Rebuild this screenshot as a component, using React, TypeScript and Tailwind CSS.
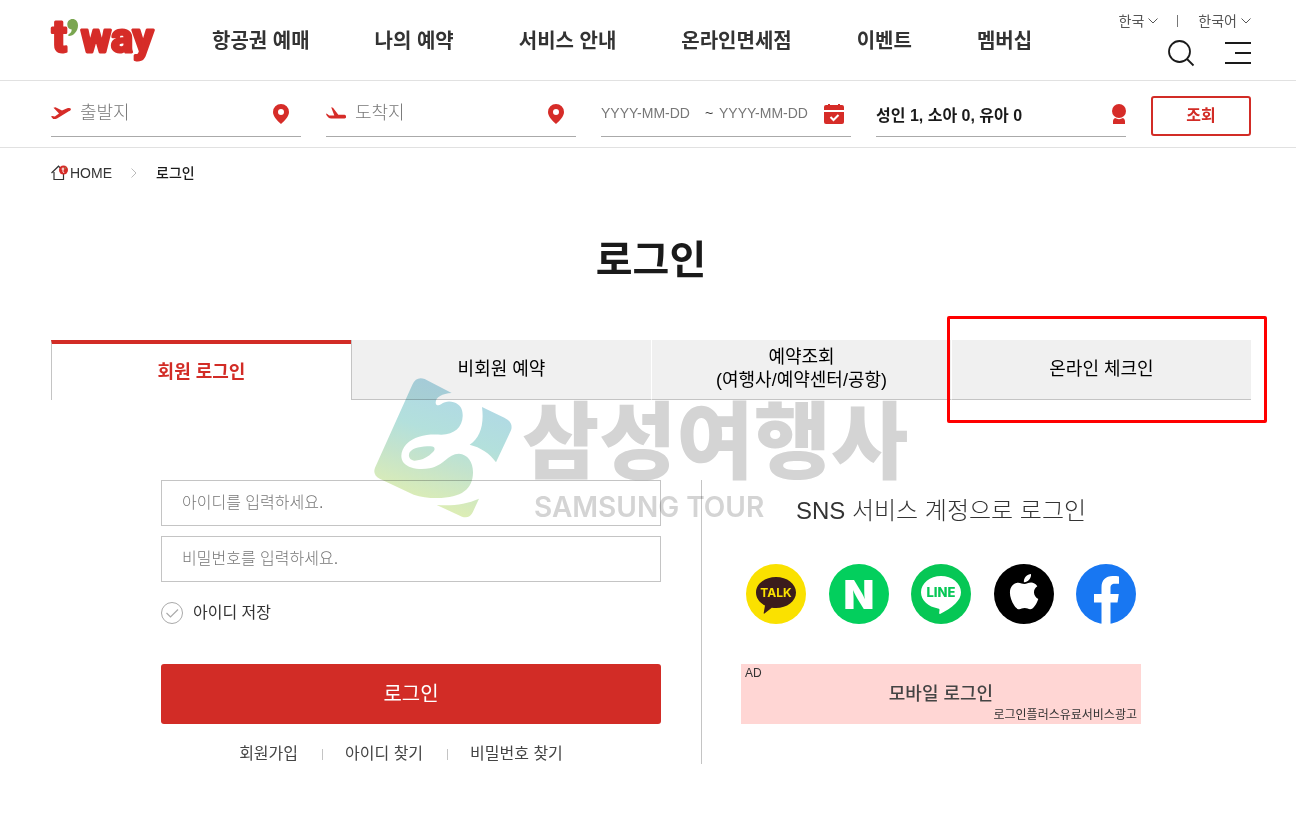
import type { ReactNode } from "react";

const NAV_ITEMS = ["항공권 예매", "나의 예약", "서비스 안내", "온라인면세점", "이벤트", "멤버십"];

const TABS = [
  { id: "member", lines: ["회원 로그인"] },
  { id: "guest", lines: ["비회원 예약"] },
  { id: "lookup", lines: ["예약조회", "(여행사/예약센터/공항)"] },
  { id: "checkin", lines: ["온라인 체크인"] },
];

const ACCOUNT_LINKS = ["회원가입", "아이디 찾기", "비밀번호 찾기"];

function Logo() {
  return (
    <svg width="112" height="60" viewBox="0 0 112 60" role="img" aria-label="t'way">
      <g
        fill="#d62c28"
        stroke="#d62c28"
        strokeWidth="3"
        strokeLinejoin="round"
        className="font-['Roboto',sans-serif] font-bold"
      >
        <text x="2" y="42" className="text-[44px]">t</text>
        <text x="31" y="42" className="text-[41px]">way</text>
      </g>
      <path
        d="M22.500 9c3.200 0 5.500 2.500 5.500 6.500 0 5.500-4.500 10.500-9 10.500-1-.3-1-1.300-.3-1.800 2-1.200 3-2.700 3-4.700-2.700-.2-4.400-2.200-4.400-5 0-3.200 2.200-5.500 5.200-5.500z"
        fill="#7aa650"
      />
    </svg>
  );
}

function ChevronIcon() {
  return (
    <svg width="10" height="6" viewBox="0 0 10 6" fill="none" stroke="#555" aria-hidden="true">
      <path d="M.5.5 5 5 9.500.5" />
    </svg>
  );
}

function SearchIcon() {
  return (
    <svg width="28" height="28" viewBox="0 0 28 28" fill="none" stroke="#1a1a1a" strokeWidth="1.800" aria-hidden="true">
      <circle cx="12.500" cy="12.500" r="10.500" />
      <path d="M20 20 26.500 26.500" />
    </svg>
  );
}

function MenuIcon() {
  return (
    <svg width="26" height="22" viewBox="0 0 26 22" fill="#1a1a1a" aria-hidden="true">
      <path d="M0 0h26v2H0zM10 10h16v2H10zM0 20h26v2H0z" />
    </svg>
  );
}

function DepartIcon() {
  return (
    <svg width="20" height="13" viewBox="0 0 20 13" fill="#d62c28" aria-hidden="true">
      <path d="M2.500.7 4.500.3l6.500 3.200 5.200-2.200c1.500-.6 3.200-.5 3.600.4.400 1-.7 2-2 2.600L6 11.500c-1.300.5-2.600.8-3.800.5L0 9.600l1.200-.5 2.600.4L8 6.500z" />
    </svg>
  );
}

function ArriveIcon() {
  return (
    <svg width="20" height="13" viewBox="0 0 20 13" fill="#d62c28" aria-hidden="true">
      <path d="M5.200.2 7 .8l5.300 6.900h5.500c1.500 0 2.400.8 2.400 1.900s-.9 2-2.400 2H6.200c-1.600 0-3-.3-4-1.300C1 9.200.2 8 0 6.600l1.300.3 1.900 1.700 5.100-.2z" />
    </svg>
  );
}

function PinIcon() {
  return (
    <svg width="16" height="20" viewBox="0 0 16 20" fill="#d62c28" aria-hidden="true">
      <path
        fillRule="evenodd"
        d="M8 0a8 8 0 0 1 8 8c0 4.500-4.500 9-8 12C4.500 17 0 12.500 0 8a8 8 0 0 1 8-8zm0 5a3 3 0 1 0 0 6 3 3 0 0 0 0-6z"
      />
    </svg>
  );
}

function CalendarIcon() {
  return (
    <svg width="20" height="20" viewBox="0 0 20 20" fill="#d62c28" aria-hidden="true">
      <path d="M4 0h2v1h8V0h2v1h2a2 2 0 0 1 2 2v3H0V3a2 2 0 0 1 2-2h2z" />
      <path d="M0 8h20v10a2 2 0 0 1-2 2H2a2 2 0 0 1-2-2z" />
      <path d="m6.500 13 3 3L14.500 11" fill="none" stroke="#fff" strokeWidth="2" />
    </svg>
  );
}

function PersonIcon() {
  return (
    <svg width="14" height="20" viewBox="0 0 14 20" fill="#d62c28" aria-hidden="true">
      <circle cx="7" cy="7" r="7" />
      <path d="M3 14c2.500 1.500 5.500 1.500 8 0 1.500.8 2 2 2 3.500V20H1v-2.500C1 16 1.500 14.800 3 14z" />
    </svg>
  );
}

function HomeIcon() {
  return (
    <svg width="18" height="16" viewBox="0 0 18 16" aria-hidden="true">
      <path d="M.5 8 7.500 1.200 14 8M3 7v7.500h9.500V7" fill="none" stroke="#333" strokeWidth="1.200" />
      <circle cx="12.500" cy="5" r="4.500" fill="#d62c28" />
      <path d="M12 2.500v4.200q0 .8 1.200.8M10.600 4h2.600" fill="none" stroke="#fff" />
      <circle cx="14.300" cy="3" r=".7" fill="#7aa650" />
    </svg>
  );
}

function SearchField({ children }: { children: ReactNode }) {
  return (
    <div className="flex h-[41px] min-w-0 flex-1 items-center border-b border-[#aaa] pb-1">{children}</div>
  );
}

function SiteHeader() {
  return (
    <header className="flex h-[81px] justify-between border-b border-[#e1e1e1] pr-[45px] pl-[50px]">
      <div className="flex">
        <a href="#home" className="pt-[10px]">
          <Logo />
        </a>
        <nav className="ml-[50px] flex items-center gap-[65px] pt-[2px]">
          {NAV_ITEMS.map((item) => (
            <a key={item} href="#menu" className="text-[20px] font-bold whitespace-nowrap text-[#333]">
              {item}
            </a>
          ))}
        </nav>
      </div>
      <div className="flex flex-col items-end pt-[11px]">
        <div className="flex items-center text-[14px] leading-5 text-[#555]">
          <button type="button" className="flex items-center gap-1">
            한국 <ChevronIcon />
          </button>
          <span className="mr-5 ml-[19px] h-3 w-px bg-[#777]" />
          <button type="button" className="flex items-center gap-1">
            한국어 <ChevronIcon />
          </button>
        </div>
        <div className="mt-2 flex items-center gap-[30px]">
          <button type="button" aria-label="검색">
            <SearchIcon />
          </button>
          <button type="button" aria-label="전체 메뉴">
            <MenuIcon />
          </button>
        </div>
      </div>
    </header>
  );
}

function FlightSearch() {
  const input = "min-w-0 outline-none placeholder:text-[#777]";
  return (
    <form className="flex h-[67px] items-center gap-[25px] border-b border-[#e1e1e1] pt-1 pr-[45px] pl-[51px]">
      <SearchField>
        <DepartIcon />
        <input aria-label="출발지" placeholder="출발지" className={`ml-[9px] flex-1 text-[18px] font-light ${input}`} />
        <span className="mr-3">
          <PinIcon />
        </span>
      </SearchField>
      <SearchField>
        <ArriveIcon />
        <input aria-label="도착지" placeholder="도착지" className={`ml-[9px] flex-1 text-[18px] font-light ${input}`} />
        <span className="mr-3">
          <PinIcon />
        </span>
      </SearchField>
      <SearchField>
        <input aria-label="가는 날" placeholder="YYYY-MM-DD" className={`w-[104px] text-[14px] ${input}`} />
        <span className="w-[14px] text-[14px] text-[#333]">~</span>
        <input aria-label="오는 날" placeholder="YYYY-MM-DD" className={`flex-1 text-[14px] ${input}`} />
        <span className="mr-[7px]">
          <CalendarIcon />
        </span>
      </SearchField>
      <SearchField>
        <button
          type="button"
          className="flex flex-1 items-center justify-between text-[16px] font-bold text-[#1a1a1a]"
        >
          <span className="pt-1">성인 1, 소아 0, 유아 0</span>
          <PersonIcon />
        </button>
      </SearchField>
      <button
        type="button"
        className="h-10 w-[100px] rounded-[3px] border-2 border-[#d22c26] text-[16px] font-bold text-[#d22c26]"
      >
        조회
      </button>
    </form>
  );
}

function Breadcrumb() {
  return (
    <nav aria-label="현재 위치" className="flex h-[50px] items-center text-[14px] text-[#333]">
      <a href="#home" className="flex items-center gap-px">
        <HomeIcon />
        HOME
      </a>
      <svg width="6" height="10" viewBox="0 0 6 10" fill="none" stroke="#bbb" className="mx-[19px]" aria-hidden="true">
        <path d="M.5.5 5 5 .5 9.500" />
      </svg>
      <span className="font-medium text-[#1a1a1a]">로그인</span>
    </nav>
  );
}

function LoginTabs() {
  return (
    <div role="tablist" className="relative grid grid-cols-4">
      {TABS.map((tab, i) => (
        <button
          key={tab.id}
          type="button"
          role="tab"
          aria-selected={i === 0}
          className={`h-[60px] border-l text-[18px] leading-[23px] ${
            i === 0
              ? "border-t-4 border-t-[#d22c26] border-l-[#c4c4c4] bg-white font-bold text-[#d22c26]"
              : `border-b border-b-[#c4c4c4] bg-[#f0f0f0] pb-px text-black ${
                  i === 1 ? "border-l-[#c4c4c4]" : "border-l-white"
                }`
          }`}
        >
          {tab.lines.map((line) => (
            <span key={line} className="block">
              {line}
            </span>
          ))}
        </button>
      ))}
      {/* highlight frame around the check-in tab */}
      <div className="pointer-events-none absolute -top-6 -right-4 h-[107px] w-[320px] rounded-xs border-3 border-[#f00]" />
    </div>
  );
}

function Watermark() {
  return (
    <div className="pointer-events-none absolute top-[229px] left-[373px] flex mix-blend-multiply" aria-hidden="true">
      <svg width="140" height="142" viewBox="40 20 420 426">
        <defs>
          <linearGradient id="mark" gradientUnits="userSpaceOnUse" x1="310" y1="60" x2="200" y2="400">
            <stop offset="0" stopColor="#b0d8e6" />
            <stop offset=".4" stopColor="#b3e0dc" />
            <stop offset=".65" stopColor="#c4e3cc" />
            <stop offset="1" stopColor="#dcedb5" />
          </linearGradient>
        </defs>
        <g fill="url(#mark)">
          <path
            fillRule="evenodd"
            d="M195 26 276 68C248 70 228 80 228 97 228 105 236 107 244 102 256 93 270 92 282 96 302 102 310 118 309 138 308 170 285 193 245 193 205 190 165 195 140 222 124 240 120 262 132 277 147 295 180 299 210 294 252 286 264 251 298 250 324 252 341 275 340 308 339 355 307 383 232 383 205 383 183 380 162 373L60 325Q38 314 46 292L158 43Q170 17 195 26ZM213 228C226 228 228 237 220 245 207 258 190 270 165 271 150 270 144 257 150 246 160 232 185 228 213 228Z"
          />
          <path d="M367 110 434 142Q462 156 454 180L409 276C391 249 362 231 330 223 361 204 374 164 367 110Z" />
          <path d="M231 404C280 408 320 401 358 385L340 424Q330 446 307 439Z" />
        </g>
      </svg>
      <div className="ml-[9px] text-[#d4d4d4]">
        <div className="mt-[18px] text-[84px] leading-[96px] font-black whitespace-nowrap">삼성여행사</div>
        <div className="ml-[12px] font-['Inter',sans-serif] text-[28px] leading-8 font-semibold whitespace-nowrap">
          SAMSUNG TOUR
        </div>
      </div>
    </div>
  );
}

function LoginForm() {
  const field =
    "h-[46px] w-full border border-[#c4c4c4] px-5 text-[16px] font-light outline-none placeholder:text-[#777]";
  return (
    <form className="min-w-0 flex-1">
      <input aria-label="아이디" placeholder="아이디를 입력하세요." className={field} />
      <input
        type="password"
        aria-label="비밀번호"
        placeholder="비밀번호를 입력하세요."
        className={`mt-[10px] ${field}`}
      />
      <label className="mt-[19px] flex h-6 items-center gap-[10px] text-[16px] text-[#333]">
        <span className="relative h-[22px] w-[22px]">
          <input type="checkbox" className="peer block h-full w-full appearance-none rounded-full border border-[#aaa]" />
          <svg
            viewBox="0 0 22 22"
            fill="none"
            stroke="currentColor"
            strokeWidth="1.200"
            className="pointer-events-none absolute inset-0 text-[#aaa] peer-checked:text-[#d22c26]"
            aria-hidden="true"
          >
            <path d="m5.500 11 4 4L17 7.500" />
          </svg>
        </span>
        아이디 저장
      </label>
      <button type="submit" className="mt-[39px] h-[60px] w-full rounded-[3px] bg-[#d22c26] text-[20px] text-white">
        로그인
      </button>
      <div className="mt-5 flex items-center justify-center pr-5 text-[16px] leading-5 text-[#444]">
        {ACCOUNT_LINKS.map((link, i) => (
          <div key={link} className="flex items-center">
            {i > 0 && <span className="mr-[22px] ml-6 h-[11px] w-px bg-[#c4c4c4]" />}
            <a href="#account">{link}</a>
          </div>
        ))}
      </div>
    </form>
  );
}

function KakaoIcon() {
  return (
    <svg width="60" height="60" viewBox="0 0 60 60" aria-hidden="true">
      <circle cx="30" cy="30" r="30" fill="#fae100" />
      <path
        d="M30 13c11 0 20 6.800 20 15.500S41 44 30 44c-1.500 0-2.800-.1-4.200-.3L18.500 49.600c-.5.300-1 0-.8-.6L19 41.500C13.500 38.700 10 34 10 28.500 10 19.800 19 13 30 13z"
        fill="#3b1c1c"
      />
      <text x="30" y="33" textAnchor="middle" fill="#fae100" className="font-['Inter',sans-serif] text-[12px] font-bold">
        TALK
      </text>
    </svg>
  );
}

function NaverIcon() {
  return (
    <svg width="60" height="60" viewBox="0 0 60 60" aria-hidden="true">
      <circle cx="30" cy="30" r="30" fill="#03cf5d" />
      <text x="30" y="45" textAnchor="middle" fill="#fff" className="font-['Inter',sans-serif] text-[40px] font-black">
        N
      </text>
    </svg>
  );
}

function LineIcon() {
  return (
    <svg width="60" height="60" viewBox="0 0 60 60" aria-hidden="true">
      <circle cx="30" cy="30" r="30" fill="#06c755" />
      <path
        d="M30 12c11 0 20 7.300 20 16.300 0 4.300-2 7.800-5.500 11.200C40 44 34 47.500 29.500 49.800c-1.200.5-1.500-.2-1.300-1.200l.3-2.500c0-1-.2-1.500-1.500-1.700C17.300 43 10 36.400 10 28.300 10 19.300 19 12 30 12z"
        fill="#fff"
      />
      <text x="30" y="33" textAnchor="middle" fill="#06c755" className="font-['Inter',sans-serif] text-[13px] font-extrabold">
        LINE
      </text>
    </svg>
  );
}

function AppleIcon() {
  return (
    <svg width="60" height="60" viewBox="0 0 60 60" aria-hidden="true">
      <circle cx="30" cy="30" r="30" />
      <path
        d="M37 10c.3 2.200-.6 4.300-1.900 5.800-1.300 1.500-3.300 2.600-5.200 2.400-.3-2.100.7-4.200 1.900-5.600C33.200 11.200 35.300 10.100 37 10zM43.300 22.300c-4.800 3-4.300 10.300 1 12.600-1 2.800-2.200 5.200-3.800 7.300-1.300 1.900-2.700 3-4.300 3-2 0-2.900-1.200-5.500-1.200s-3.600 1.200-5.500 1.200c-1.800 0-3.300-1.400-4.800-3.500-4.800-6.800-6-15.800-2.300-20 1.700-2 3.900-3 6.100-3 2.500 0 4.200 1.300 6.300 1.300 2 0 3.600-1.500 6.600-1.500 2.300 0 4.600 1.200 6.200 3.800z"
        fill="#fff"
      />
    </svg>
  );
}

function FacebookIcon() {
  return (
    <svg width="60" height="60" viewBox="0 0 60 60" aria-hidden="true">
      <circle cx="30" cy="30" r="30" fill="#1877f2" />
      <path
        d="M25.500 60V38.500H18V30h7.500v-6.500c0-7.500 4.300-11.500 11-11.500 2.800 0 5.200.2 6.500.4v7.300h-4c-3.500 0-4.500 1.800-4.500 4.300v6h8.300l-1.300 8.500h-7V60z"
        fill="#fff"
      />
    </svg>
  );
}

const SNS = [
  { name: "카카오톡", Icon: KakaoIcon },
  { name: "네이버", Icon: NaverIcon },
  { name: "라인", Icon: LineIcon },
  { name: "애플", Icon: AppleIcon },
  { name: "페이스북", Icon: FacebookIcon },
];

function SnsLogin() {
  return (
    <section className="ml-10 w-[440px] border-l border-[#c4c4c4] pl-[39px]">
      <h2 className="mt-[13px] text-center text-[24px] leading-9 font-light whitespace-nowrap text-[#333]">
        SNS 서비스 계정으로 로그인
      </h2>
      <div className="mt-[35px] flex justify-between px-[5px]">
        {SNS.map(({ name, Icon }) => (
          <button key={name} type="button" aria-label={name} className="rounded-full">
            <Icon />
          </button>
        ))}
      </div>
      <a
        href="#mobile"
        className="relative mt-10 flex h-[60px] items-center justify-center bg-[#ffd6d4] text-[18px] font-medium text-[#444]"
      >
        <span className="absolute top-0 left-1 text-[12px] leading-[18px] font-normal text-[#333]">AD</span>
        모바일 로그인
        <span className="absolute right-1 bottom-0 text-[12px] leading-[18px] font-normal text-[#333]">
          로그인플러스유료서비스광고
        </span>
      </a>
    </section>
  );
}

export default function App() {
  return (
    <div className="min-h-screen bg-white font-['Liberation_Sans','Noto_Sans_CJK_KR',sans-serif]">
      <SiteHeader />
      <FlightSearch />
      <main className="relative pr-[45px] pb-16 pl-[51px]">
        <Breadcrumb />
        <h1 className="mt-8 text-center text-[40px] leading-[60px] font-bold text-[#1a1a1a]">로그인</h1>
        <div className="mt-[50px]">
          <LoginTabs />
        </div>
        <div className="mx-auto mt-20 flex max-w-[980px]">
          <LoginForm />
          <SnsLogin />
        </div>
        <Watermark />
      </main>
    </div>
  );
}
